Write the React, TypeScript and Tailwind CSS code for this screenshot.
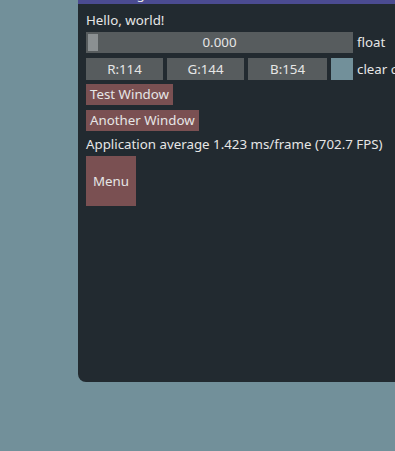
import React from "react";

export default function App() {
  const font = { fontFamily: '"Noto Sans", "Open Sans", sans-serif' };
  return (
    <div
      className="w-[395px] h-[451px] overflow-hidden bg-[#72909a] text-[#e6e6e6] text-[13.3px] leading-[17px]"
      style={font}
    >
      <div className="ml-[78px] mt-[-15px] w-[340px] h-[397px] bg-[#222a30] rounded-b-[8px] flex flex-col">
        <div className="h-[19px] bg-[#4b4b91] flex items-center pl-[25px] shrink-0">
          <span className="leading-[19px]">Debug</span>
        </div>
        <div className="pl-[8px] flex flex-col">
          <div className="h-[25px] flex items-end whitespace-nowrap">Hello, world!</div>
          <div className="mt-[3px] flex items-center gap-[4px]">
            <div className="relative shrink-0 w-[267px] h-[21px] bg-[#575c5e] flex items-center justify-center">
              <div className="absolute left-[2px] top-[2px] w-[10px] h-[17px] bg-[#8b9092]" />
              <span>0.000</span>
            </div>
            <span className="whitespace-nowrap">float</span>
          </div>
          <div className="mt-[5px] flex items-center gap-[4px]">
            <div className="shrink-0 w-[77px] h-[22px] bg-[#575c5e] flex items-center justify-center">R:114</div>
            <div className="shrink-0 w-[77px] h-[22px] bg-[#575c5e] flex items-center justify-center">G:144</div>
            <div className="shrink-0 w-[79px] h-[22px] bg-[#575c5e] flex items-center justify-center">B:154</div>
            <div className="shrink-0 w-[22px] h-[22px] bg-[#72909a]" />
            <span className="whitespace-nowrap">clear color</span>
          </div>
          <div className="mt-[4px] flex">
            <div className="h-[21px] px-[4px] bg-[#7a5052] flex items-center whitespace-nowrap">Test Window</div>
          </div>
          <div className="mt-[5px] flex">
            <div className="h-[21px] px-[4px] bg-[#7a5052] flex items-center whitespace-nowrap">Another Window</div>
          </div>
          <div className="mt-[5px] h-[17px] whitespace-nowrap">Application average 1.423 ms/frame (702.7 FPS)</div>
          <div className="mt-[3px] flex">
            <div className="w-[50px] h-[50px] bg-[#7a5052] flex items-center justify-center">Menu</div>
          </div>
        </div>
      </div>
    </div>
  );
}
